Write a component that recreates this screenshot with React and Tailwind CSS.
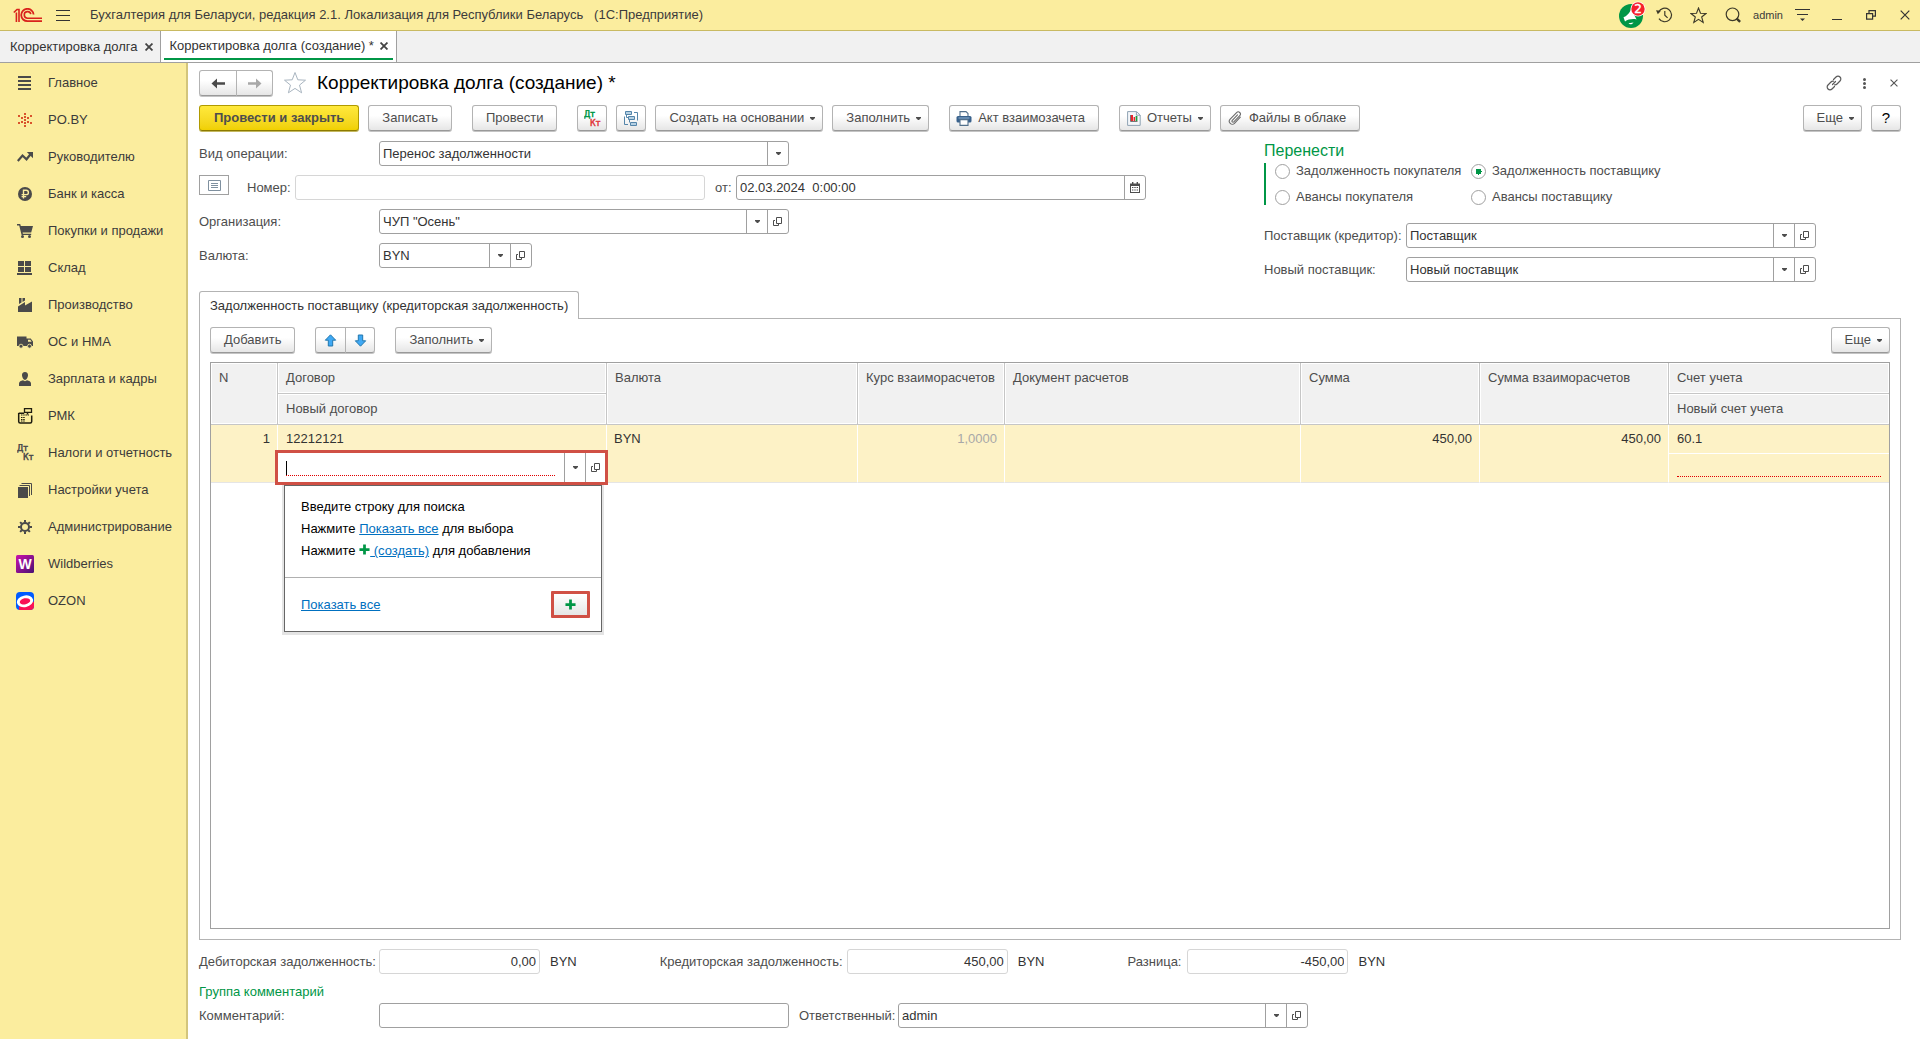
// App.jsx
import { useState } from 'react'

/* ---------- icons ---------- */

function Caret() {
    return (
        <svg width="5" height="3" viewBox="0 0 5 3" className="shrink-0" aria-hidden="true">
            <path d="M0 0h5v1L3 3H2L0 1z" fill="#4d4d4d" />
        </svg>
    )
}

function OpenIcon() {
    return (
        <svg width="10" height="10" viewBox="0 0 10 10" fill="none" stroke="#4d4d4d" strokeWidth="1" aria-hidden="true">
            <path d="M3.5 0.5h5v6h-5z" />
            <path d="M2 3.5H0.5v5h5V7" />
        </svg>
    )
}

function PlusIcon({ className }) {
    return (
        <svg width="11" height="11" viewBox="0 0 12 12" className={className} aria-hidden="true">
            <path d="M4.5 0.5h3v4h4v3h-4v4h-3v-4h-4v-3h4z" fill="#009646" />
        </svg>
    )
}

function StarIcon({ size, color, width = 1 }) {
    return (
        <svg width={size} height={size} viewBox="0 0 24 24" fill="none" stroke={color} strokeWidth={width} aria-hidden="true">
            <path d="M12 1.5l2.8 7.3 7.7 0.4-6 4.9 2.1 7.7L12 17.4l-6.6 4.4 2.1-7.7-6-4.9 7.7-0.4z" />
        </svg>
    )
}

function Logo() {
    return (
        <svg width="30" height="15" viewBox="0 0 30 15" fill="none" stroke="#d9221c" aria-hidden="true">
            <path d="M0.8 4.5L4 1.5H6V14M3.4 4.5V14" strokeWidth="1.6" />
            <path d="M20.6 6.5A6.2 6.2 0 1 0 14.5 13.2H29" strokeWidth="1.8" />
            <path d="M17.8 6.2A3.3 3.3 0 1 0 14.6 10.2H29" strokeWidth="1.6" />
        </svg>
    )
}

function BellIcon() {
    return (
        <svg width="30" height="29" viewBox="0 0 30 29" aria-hidden="true">
            <circle cx="13" cy="15" r="12" fill="#009646" />
            <path d="M5.5 16.2c3-0.8 6.2-4 7.5-8.2l5.6 10.4c-4.2-0.8-8.6 0-11.6 2z" fill="#fff" />
            <path d="M10.5 22.2c1 1.5 4 1.3 5-0.8z" fill="#fff" />
            <circle cx="20" cy="8" r="7.5" fill="#fff" />
            <circle cx="20" cy="8" r="6.7" fill="#f6202a" />
            <text x="20" y="12" textAnchor="middle" fontSize="12" fill="#fff" stroke="#fff" strokeWidth="0.4" fontFamily="DejaVu Sans, sans-serif">2</text>
        </svg>
    )
}

function HistoryIcon() {
    return (
        <svg width="17" height="16" viewBox="0 0 17 16" fill="none" stroke="#3d3a2a" strokeWidth="1.2" aria-hidden="true">
            <path d="M2.6 5A6.8 6.8 0 1 1 3 11.6" />
            <path d="M8.8 4v4.3l2.8 2.6" />
            <path d="M0 3.2l5 0.6-3.2 3.4z" fill="#3d3a2a" stroke="none" />
        </svg>
    )
}

function SearchIcon() {
    return (
        <svg width="16" height="16" viewBox="0 0 16 16" fill="none" stroke="#3d3a2a" aria-hidden="true">
            <circle cx="7.5" cy="7.3" r="6.3" strokeWidth="1.2" />
            <path d="M11.5 11.3l3.6 3.6" strokeWidth="2.4" />
        </svg>
    )
}

function MenuLinesIcon() {
    return (
        <svg width="15" height="14" viewBox="0 0 15 14" aria-hidden="true">
            <path d="M0 1.5h15M2 6.5h11" stroke="#333" strokeWidth="1.2" />
            <path d="M5 10.5h5l-2.5 2.500z" fill="#333" />
        </svg>
    )
}

function CrossIcon({ size = 10, width = 1.2, color = '#333' }) {
    return (
        <svg width={size} height={size} viewBox="0 0 10 10" fill="none" stroke={color} strokeWidth={width} aria-hidden="true">
            <path d="M0.7 0.7l8.6 8.6M9.3 0.7L0.7 9.3" />
        </svg>
    )
}

function LinkIcon() {
    return (
        <svg width="16" height="16" viewBox="0 0 16 16" fill="none" stroke="#5a5a5a" strokeWidth="1.2" strokeLinecap="round" aria-hidden="true">
            <path d="M7.500 4.500l2.500-2.500a2.800 2.800 0 0 1 4 4l-3 3a2.800 2.800 0 0 1-2.400 0.800" />
            <path d="M8.500 11.500l-2.500 2.500a2.800 2.800 0 0 1-4-4l3-3a2.800 2.800 0 0 1 2.400-0.800" />
            <path d="M6.500 9.500l3-3" />
        </svg>
    )
}

function ArrowIcon({ direction, color }) {
    return (
        <svg width="15" height="11" viewBox="0 0 15 11" className={direction === 'right' ? 'rotate-180' : ''} aria-hidden="true">
            <path d="M0.500 5.500L6 0.500v3.700h8v2.600H6v3.700z" fill={color} />
        </svg>
    )
}

function BlueArrow({ down }) {
    return (
        <svg width="13" height="13" viewBox="0 0 13 13" className={down ? 'rotate-180' : ''} aria-hidden="true">
            <path d="M6.5 0.8l5.2 5.4H8.7v5.8H4.3V6.2H1.3z" fill="#3fa9f5" stroke="#2277ad" strokeWidth="1" strokeLinejoin="round" />
        </svg>
    )
}

function DtKtIcon({ top, bottom }) {
    return (
        <svg width="17" height="17" viewBox="0 0 17 17" fontFamily="DejaVu Sans, sans-serif" fontSize="8" strokeWidth="0.5" aria-hidden="true">
            <text x="0" y="7" fill={top} stroke={top}>Дт</text>
            <text x="6" y="16" fill={bottom} stroke={bottom}>Кт</text>
        </svg>
    )
}

function StructureIcon() {
    return (
        <svg width="14" height="15" viewBox="0 0 14 15" fill="none" stroke="#5485aa" aria-hidden="true">
            <path d="M1.500 0.500h6v3h-6zM4.500 5.500h6v3h-6zM6.500 11.500h6v3h-6z" fill="#b5d0e3" />
            <path d="M10 1.500h3.500V9.500M4 13.500H0.500V5.500M2.500 3.500V6.500H4.500M5.500 8.500v3" />
        </svg>
    )
}

function PrinterIcon() {
    return (
        <svg width="16" height="15" viewBox="0 0 16 15" aria-hidden="true">
            <path d="M4 0.6h6l2 2V6H4z" fill="#fff" stroke="#52708c" strokeWidth="1.1" />
            <rect x="0.5" y="5" width="15" height="6.5" rx="1.5" fill="#38618c" />
            <path d="M4 8.6h8v5.8H4z" fill="#fff" stroke="#52708c" strokeWidth="1.1" />
            <rect x="2.5" y="6.5" width="11" height="1" fill="#8fb3d4" />
        </svg>
    )
}

function ReportIcon() {
    return (
        <svg width="14" height="15" viewBox="0 0 14 15" aria-hidden="true">
            <path d="M0.6 0.6h9l3.6 3.4v10.4H0.6z" fill="#f4f7fa" stroke="#8fa3b3" strokeWidth="1" />
            <path d="M9.4 0.8v3.4h3.6" fill="none" stroke="#8fa3b3" />
            <path d="M3.5 4v6.500h7" fill="none" stroke="#777" strokeWidth="1" />
            <rect x="4" y="4" width="2" height="6" fill="#e8252c" />
            <rect x="6.600" y="6" width="1.400" height="4" fill="#e8252c" />
            <rect x="8.600" y="5" width="1.800" height="5" fill="#1f9a3c" />
        </svg>
    )
}

function ClipIcon() {
    return (
        <svg width="14" height="14" viewBox="0 0 14 14" fill="none" stroke="#6b6b6b" strokeWidth="1.1" strokeLinecap="round" aria-hidden="true">
            <path d="M9.5 3.8L4.3 9.4a1 1 0 0 0 1.5 1.500l6-6.300a2.100 2.100 0 0 0-3.200-3L2.200 8.200a3 3 0 0 0 4.300 4.200l5.800-6.200" />
        </svg>
    )
}

function CalendarIcon() {
    return (
        <svg width="10" height="11" viewBox="0 0 10 11" aria-hidden="true">
            <path d="M0 1.5h10V11H0z" fill="#4d4d4d" />
            <path d="M2 0h1.4v2H2zM6.6 0H8v2H6.6z" fill="#4d4d4d" />
            <path d="M1 4h8v6H1z" fill="#fff" />
            <path d="M2 5.5h6M2 8h6" stroke="#4d4d4d" strokeWidth="1.2" strokeDasharray="1.4 0.9" />
        </svg>
    )
}

function ListIcon() {
    return (
        <svg width="13" height="11" viewBox="0 0 13 11" fill="none" stroke="#7f909f" aria-hidden="true">
            <path d="M0.5 0.5h12v10H0.5z" />
            <path d="M3 3.5h7M3 5.5h7M3 7.5h7" />
        </svg>
    )
}

const DARK = '#4a4a4a'

const sidebarIcons = {
    main: (
        <svg width="16" height="16" viewBox="0 0 16 16"><path d="M1 2h13M1 6h13M1 10h13M1 14h13" stroke={DARK} strokeWidth="2" /></svg>
    ),
    poby: (
        <svg width="16" height="16" viewBox="0 0 16 16" fill="#d9532c">
            <path d="M7 1h2v2H7zM7 4h2v2H7zM7 7h2v2H7zM7 10h2v2H7zM7 13h2v2H7zM1 3h2v2H1zM13 3h2v2h-2zM4 5h2v2H4zM10 5h2v2h-2zM4 9h2v2H4zM10 9h2v2h-2zM1 10h2v2H1zM13 10h2v2h-2z" />
        </svg>
    ),
    manager: (
        <svg width="16" height="16" viewBox="0 0 16 16">
            <path d="M0.8 12L5.5 6.5 9.5 10.3 13.5 5.2" fill="none" stroke={DARK} strokeWidth="2.2" />
            <path d="M9.8 3H16v6.2z" fill={DARK} />
        </svg>
    ),
    bank: (
        <svg width="16" height="16" viewBox="0 0 16 16">
            <circle cx="8" cy="8" r="7" fill={DARK} />
            <path d="M6.5 12.5V4.2h2.7a2.1 2.1 0 0 1 0 4.4H4.6M4.6 10.6h4.6" fill="none" stroke="#fbed9e" strokeWidth="1.4" />
        </svg>
    ),
    cart: (
        <svg width="16" height="16" viewBox="0 0 16 16" fill={DARK}>
            <path d="M0 1h3.2l0.6 2H16l-1.8 6.5H5.6l0.3 1.2h8.3v1.3H4.6L2.2 2.4H0z" />
            <circle cx="5.5" cy="13.5" r="1.5" />
            <circle cx="12.5" cy="13.5" r="1.5" />
        </svg>
    ),
    store: (
        <svg width="16" height="16" viewBox="0 0 16 16" fill={DARK}>
            <path d="M1 1h6v5H1zM8 1h6v5H8zM1 7h6v5H1zM8 7h6v5H8zM0 13h15v2H0z" />
        </svg>
    ),
    factory: (
        <svg width="16" height="16" viewBox="0 0 16 16" fill={DARK}>
            <path d="M1 15V9.500L8 5v3.500L15 4.500V15z" />
            <path d="M2 1h2.500v4.500L2 7zM5.500 1H8v2.500L5.500 5z" />
        </svg>
    ),
    truck: (
        <svg width="16" height="16" viewBox="0 0 16 16" fill={DARK}>
            <path d="M0 2.500h9.500V12H0zM9.500 4.500h4.200L16 7.500V12H9.500z" />
            <path d="M11 5.700h2.300l1.300 2H11z" fill="#fbed9e" />
            <circle cx="4" cy="12.2" r="2" stroke="#fbed9e" strokeWidth="0.8" />
            <circle cx="12.5" cy="12.2" r="2" stroke="#fbed9e" strokeWidth="0.8" />
        </svg>
    ),
    person: (
        <svg width="16" height="16" viewBox="0 0 16 16" fill={DARK}>
            <path d="M8 1c2 0 3.200 1.500 3 3.500S9.500 9 8 9 5.200 6.500 5 4.500 6 1 8 1zM2 15v-2.500C2 10.500 4 9.800 6 9.300L8 10.200l2-0.900c2 0.500 4 1.200 4 3.200V15z" />
        </svg>
    ),
    rmk: (
        <svg width="16" height="16" viewBox="0 0 16 16" fill="none" stroke="#1f1d10">
            <path d="M7.500 0.700h7v3.600h-7z" strokeWidth="1.300" />
            <path d="M10.500 4.500v2M1.700 5.200h5.500M1.700 5v8.500c0 1 0.500 1.500 1.500 1.500h10c1 0 1.500-0.500 1.500-1.500V7.500" strokeWidth="1.500" />
            <path d="M4 7h8M4 9.500h4M4 11.500h4M4 13h4" strokeWidth="1.100" strokeDasharray="1.500 0.700" />
        </svg>
    ),
    dtkt: <DtKtIcon top={DARK} bottom={DARK} />,
    settings: (
        <svg width="16" height="16" viewBox="0 0 16 16">
            <path d="M1 5h10v11H1z" fill={DARK} />
            <path d="M2.500 3.500h10V14M4.500 1.500h10V13" fill="none" stroke={DARK} />
        </svg>
    ),
    gear: (
        <svg width="16" height="16" viewBox="0 0 16 16" fill="none" stroke={DARK}>
            <circle cx="8" cy="8" r="4" strokeWidth="2" />
            <path d="M8 1v2.500M8 12.500V15M1 8h2.500M12.500 8H15M3.100 3.100l1.700 1.700M11.200 11.200l1.700 1.700M3.100 12.900l1.700-1.700M11.200 4.800l1.700-1.700" strokeWidth="2" />
        </svg>
    ),
    wildberries: (
        <svg width="18" height="18" viewBox="0 0 18 18">
            <defs>
                <linearGradient id="wb" x1="0" y1="0" x2="1" y2="1">
                    <stop offset="0" stopColor="#cb11ab" />
                    <stop offset="1" stopColor="#481173" />
                </linearGradient>
            </defs>
            <rect width="18" height="18" rx="1.500" fill="url(#wb)" />
            <text x="9" y="14" textAnchor="middle" fontSize="14" fontWeight="bold" fill="#fff" fontFamily="Liberation Sans, sans-serif">W</text>
        </svg>
    ),
    ozon: (
        <svg width="18" height="18" viewBox="0 0 18 18">
            <defs>
                <clipPath id="oz"><rect width="18" height="18" rx="4" /></clipPath>
            </defs>
            <g clipPath="url(#oz)">
                <rect width="18" height="18" fill="#005bff" />
                <path d="M18 9.500L3 14.500V18h15z" fill="#f91155" />
                <ellipse cx="9" cy="9.300" rx="8.200" ry="5.800" fill="#fff" transform="rotate(-12 9 9.300)" />
                <ellipse cx="9" cy="9.300" rx="5.300" ry="3" fill="#f91155" transform="rotate(-12 9 9.300)" />
            </g>
        </svg>
    ),
}

const sections = [
    { icon: 'main', title: 'Главное' },
    { icon: 'poby', title: 'PO.BY' },
    { icon: 'manager', title: 'Руководителю' },
    { icon: 'bank', title: 'Банк и касса' },
    { icon: 'cart', title: 'Покупки и продажи' },
    { icon: 'store', title: 'Склад' },
    { icon: 'factory', title: 'Производство' },
    { icon: 'truck', title: 'ОС и НМА' },
    { icon: 'person', title: 'Зарплата и кадры' },
    { icon: 'rmk', title: 'РМК' },
    { icon: 'dtkt', title: 'Налоги и отчетность' },
    { icon: 'settings', title: 'Настройки учета' },
    { icon: 'gear', title: 'Администрирование' },
    { icon: 'wildberries', title: 'Wildberries' },
    { icon: 'ozon', title: 'OZON' },
]

/* ---------- controls ---------- */

const buttonColors = {
    plain: 'border-[#b3b3b3] border-b-[#999] bg-linear-to-b from-white from-40% to-[#e6e6e6] shadow-[0_1px_0_#c4c4c4]',
    primary: 'border-[#b09a00] border-b-[#8c7a00] bg-linear-to-b from-[#ffe93b] to-[#f0d000] shadow-[0_1px_0_#c4b860] font-bold',
}

function Button({ children, className = '', menu = false, color = 'plain', ...rest }) {
    return (
        <button
            type="button"
            className={`flex h-[26px] shrink-0 items-center justify-center whitespace-nowrap rounded-[3px] border text-[#4d4d4d] ${buttonColors[color]} ${menu ? 'gap-[6px] pl-[13px] pr-[7px]' : ''} ${className}`}
            {...rest}
        >
            {children}
            {menu && <Caret />}
        </button>
    )
}

function Field({ id, value, className = '', open = false, calendar = false }) {
    return (
        <div className={`flex h-[25px] rounded-[3px] border border-[#a0a0a0] bg-white ${className}`}>
            <input id={id} defaultValue={value} className="w-0 min-w-0 flex-1 bg-transparent px-[3px] text-[#333] outline-none" />
            {calendar ? (
                <button type="button" aria-label="Календарь" className="flex w-[21px] items-center justify-center border-l border-[#a0a0a0]">
                    <CalendarIcon />
                </button>
            ) : (
                open && (
                    <>
                        <button type="button" aria-label="Выбрать" className="flex w-[21px] items-center justify-center border-l border-[#a0a0a0]">
                            <Caret />
                        </button>
                        <button type="button" aria-label="Открыть" className="flex w-[21px] items-center justify-center border-l border-[#a0a0a0]">
                            <OpenIcon />
                        </button>
                    </>
                )
            )}
        </div>
    )
}

function Total({ id, label, value, labelClass = '' }) {
    return (
        <div className="flex items-center">
            <label htmlFor={id} className={labelClass}>{label}</label>
            <input id={id} readOnly value={value} className="h-[25px] w-[161px] rounded-[3px] border border-[#d6d6d6] px-[3px] text-right text-[#333] outline-none" />
            <span className="pl-[10px] text-[#333]">BYN</span>
        </div>
    )
}

/* ---------- page parts ---------- */

function TitleBar() {
    return (
        <header className="flex h-[31px] items-center border-b border-[#c9ba62] bg-[#fbed9e] text-[#3b3b3b]">
            <div className="flex w-[56px] pl-[13px]"><Logo /></div>
            <button type="button" aria-label="Меню" className="flex w-[14px] flex-col gap-1">
                <span className="h-px bg-[#333]" />
                <span className="h-px bg-[#333]" />
                <span className="h-px bg-[#333]" />
            </button>
            <h1 className="whitespace-pre pl-5">Бухгалтерия для Беларуси, редакция 2.1. Локализация для Республики Беларусь   (1С:Предприятие)</h1>
            <div className="ml-auto flex items-center pr-[10px]">
                <button type="button" aria-label="Уведомления" className="mr-2 h-[29px] w-[30px]"><BellIcon /></button>
                <button type="button" aria-label="История" className="mr-[17px]"><HistoryIcon /></button>
                <button type="button" aria-label="Избранное" className="mr-[18px]"><StarIcon size={17} color="#3d3a2a" width={1.6} /></button>
                <button type="button" aria-label="Поиск" className="mr-3">
                    <SearchIcon />
                </button>
                <button type="button" className="mr-3 text-[11px]">admin</button>
                <button type="button" aria-label="Настройки" className="mr-[22px]"><MenuLinesIcon /></button>
                <button type="button" aria-label="Свернуть" className="mr-6 flex h-[10px] w-[10px] items-end"><span className="h-px w-full bg-[#333]" /></button>
                <button type="button" aria-label="Развернуть" className="mr-6">
                    <svg width="10" height="10" viewBox="0 0 10 10" fill="none" stroke="#333" strokeWidth="1.200" aria-hidden="true">
                        <path d="M0.600 3.600h6v5.600h-6zM3 3.500V0.600h6.400v5.600H6.600" />
                    </svg>
                </button>
                <button type="button" aria-label="Закрыть"><CrossIcon /></button>
            </div>
        </header>
    )
}

function WindowTabs() {
    return (
        <nav className="flex h-8 border-b border-[#a0a0a0] bg-[#f1f1f1] text-[#333]">
            <div className="flex items-center gap-[7px] border-r border-[#a0a0a0] pl-[10px] pr-[7px]">
                <button type="button">Корректировка долга</button>
                <button type="button" aria-label="Закрыть вкладку"><CrossIcon size={8} width={2.2} color="#444" /></button>
            </div>
            <div className="flex flex-col border-r border-[#a0a0a0] bg-white px-[3px] pb-[2px]">
                <div className="flex flex-1 items-center gap-[6px] pl-[6px] pr-[5px] pt-[3px]">
                    <button type="button">Корректировка долга (создание) *</button>
                    <button type="button" aria-label="Закрыть вкладку"><CrossIcon size={8} width={2.2} color="#444" /></button>
                </div>
                <div className="h-[2px] bg-[#009646]" />
            </div>
        </nav>
    )
}

function Sidebar() {
    return (
        <aside className="w-[188px] shrink-0 border-r-2 border-[#d3c57c] bg-[#fbed9e] pt-px text-[#3b3b3b]">
            {sections.map(({ icon, title }) => (
                <a key={title} href="#" className="flex h-[37px] items-center whitespace-nowrap">
                    <span className="flex w-12 justify-center pl-[2px]">{sidebarIcons[icon]}</span>
                    {title}
                </a>
            ))}
        </aside>
    )
}

function Toolbar() {
    return (
        <div className="flex gap-[9px]">
            <Button color="primary" className="px-[14px]">Провести и закрыть</Button>
            <Button className="mr-[11px] px-[13px]">Записать</Button>
            <Button className="mr-[11px] px-[13px]">Провести</Button>
            <Button className="w-[30px]" aria-label="Дт Кт"><DtKtIcon top="#009646" bottom="#e0393e" /></Button>
            <Button className="w-[30px]" aria-label="Структура подчиненности"><StructureIcon /></Button>
            <Button menu>Создать на основании</Button>
            <Button menu className="mr-[11px]">Заполнить</Button>
            <Button className="mr-[11px] gap-[6px] pl-[6px] pr-[13px]"><PrinterIcon />Акт взаимозачета</Button>
            <Button className="gap-[6px] px-[7px]"><ReportIcon />Отчеты<Caret /></Button>
            <Button className="gap-[7px] pl-[7px] pr-[13px]"><ClipIcon />Файлы в облаке</Button>
            <Button menu className="ml-auto">Еще</Button>
            <Button className="w-[30px] text-[15px]" aria-label="Справка"><span className="text-black">?</span></Button>
        </div>
    )
}

const transferOptions = [
    'Задолженность покупателя',
    'Задолженность поставщику',
    'Авансы покупателя',
    'Авансы поставщику',
]

function TransferGroup() {
    const [selected, setSelected] = useState('Задолженность поставщику')

    return (
        <fieldset>
            <legend className="mb-[2px] text-[16px] leading-5 text-[#009646]">Перенести</legend>
            <div className="grid w-fit grid-cols-[196px_auto] gap-y-[10px] border-l-2 border-[#009646] pl-[9px]">
                {transferOptions.map((option) => (
                    <label key={option} className="flex h-4 items-center gap-[6px] whitespace-nowrap">
                        <input
                            type="radio"
                            name="transfer"
                            checked={selected === option}
                            onChange={() => setSelected(option)}
                            className="h-[15px] w-[15px] appearance-none rounded-full border border-[#a0a0a0] bg-white checked:bg-[radial-gradient(circle,#009646_0_3px,white_3px)]"
                        />
                        {option}
                    </label>
                ))}
            </div>
        </fieldset>
    )
}

function DocumentFields() {
    return (
        <div className="flex">
            <div className="mr-[118px] flex grow-[947] basis-0 flex-col gap-[9px]">
                <div className="flex items-center">
                    <label htmlFor="operation" className="w-[180px]">Вид операции:</label>
                    <div className="relative h-[25px] w-[410px] rounded-[3px] border border-[#a0a0a0]">
                        <select id="operation" className="h-full w-full appearance-none px-[3px] text-[#333] outline-none">
                            <option>Перенос задолженности</option>
                        </select>
                        <span className="pointer-events-none absolute inset-y-0 right-0 flex w-[21px] items-center justify-center border-l border-[#a0a0a0]">
                            <Caret />
                        </span>
                    </div>
                </div>
                <div className="flex h-[25px] items-center">
                    <button type="button" aria-label="История номера" className="mr-[18px] flex h-5 w-[30px] items-center justify-center self-start border border-[#a0a0a0]">
                        <ListIcon />
                    </button>
                    <label htmlFor="number" className="w-12">Номер:</label>
                    <input id="number" className="h-[25px] min-w-0 flex-1 rounded-[3px] border border-[#d6d6d6] outline-none" />
                    <label htmlFor="date" className="w-[31px] pl-[10px]">от:</label>
                    <Field id="date" value="02.03.2024  0:00:00" calendar className="flex-1" />
                </div>
                <div className="flex items-center">
                    <label htmlFor="organization" className="w-[180px]">Организация:</label>
                    <Field id="organization" value={'ЧУП "Осень"'} open className="w-[410px]" />
                </div>
                <div className="flex items-center">
                    <label htmlFor="currency" className="w-[180px]">Валюта:</label>
                    <Field id="currency" value="BYN" open className="w-[153px]" />
                </div>
            </div>
            <div className="mr-[85px] flex grow-[552] basis-0 flex-col">
                <TransferGroup />
                <div className="mt-[18px] flex flex-col gap-[9px]">
                    <div className="flex items-center">
                        <label htmlFor="supplier" className="w-[142px] whitespace-nowrap">Поставщик (кредитор):</label>
                        <Field id="supplier" value="Поставщик" open className="flex-1" />
                    </div>
                    <div className="flex items-center">
                        <label htmlFor="new-supplier" className="w-[142px] whitespace-nowrap">Новый поставщик:</label>
                        <Field id="new-supplier" value="Новый поставщик" open className="flex-1" />
                    </div>
                </div>
            </div>
        </div>
    )
}

function ContractPopup() {
    return (
        <div className="absolute left-[6px] top-[31px] w-[318px] border border-[#666] bg-white text-black shadow-[0_1px_0_2px_#e4e4e4]">
            <div className="h-[92px] border-b border-[#b0b0b0] px-4 pt-[10px] leading-[22px]">
                <p>Введите строку для поиска</p>
                <p>Нажмите <a href="#" className="text-[#0070c0] underline">Показать все</a> для выбора</p>
                <p>Нажмите <PlusIcon className="inline align-baseline" /><a href="#" className="text-[#0070c0] underline">&nbsp;(создать)</a> для добавления</p>
            </div>
            <div className="flex h-[53px] items-center justify-between pl-4 pr-[11px]">
                <a href="#" className="text-[#0070c0] underline">Показать все</a>
                <button type="button" aria-label="Создать" className="flex h-[27px] w-[39px] items-center justify-center rounded-[1px] border-[3px] border-[#d05045] bg-linear-to-b from-white to-[#e6e6e6]">
                    <PlusIcon />
                </button>
            </div>
        </div>
    )
}

function ContractEditor() {
    return (
        <div className="absolute -left-[3px] -top-1 z-10 flex h-[35px] w-[333px] border-[3px] border-[#d05045] bg-white">
            <div className="flex flex-1 pb-[6px] pl-2 pr-[9px] pt-[4px]">
                <input aria-label="Новый договор" autoFocus className="w-full border-b border-dotted border-[#e00000] bg-[linear-gradient(#000,#000)] bg-[length:1px_15px] bg-[position:0_4px] bg-no-repeat caret-transparent outline-none" />
            </div>
            <button type="button" aria-label="Выбрать" className="flex w-[21px] items-center justify-center border-l border-[#a0a0a0]">
                <Caret />
            </button>
            <button type="button" aria-label="Открыть" className="flex w-[20px] items-center justify-center border-l border-[#a0a0a0]">
                <OpenIcon />
            </button>
        </div>
    )
}

const TH = 'border-b border-r border-[#c6c6c6] bg-[#f1f1f1] px-2 text-left align-top font-normal leading-[30px] shadow-[inset_0_0_0_1px_white] last:border-r-0'
const TD = 'border-b border-r border-b-[#e5e5e5] border-r-white px-[7px] align-top leading-[28px]'

function DebtTable() {
    return (
        <div className="flex-1 border border-[#a0a0a0]">
            <table className="w-full table-fixed border-separate border-spacing-0">
                <colgroup>
                    <col className="w-[67px]" />
                    <col className="w-[329px]" />
                    <col className="w-[251px]" />
                    <col className="w-[147px]" />
                    <col className="w-[296px]" />
                    <col className="w-[179px]" />
                    <col className="w-[189px]" />
                    <col />
                </colgroup>
                <thead className="text-[#4d4d4d]">
                    <tr>
                        <th rowSpan={2} className={TH}>N</th>
                        <th className={TH}>Договор</th>
                        <th rowSpan={2} className={TH}>Валюта</th>
                        <th rowSpan={2} className={`${TH} whitespace-nowrap`}>Курс взаиморасчетов</th>
                        <th rowSpan={2} className={TH}>Документ расчетов</th>
                        <th rowSpan={2} className={TH}>Сумма</th>
                        <th rowSpan={2} className={TH}>Сумма взаиморасчетов</th>
                        <th className={TH}>Счет учета</th>
                    </tr>
                    <tr>
                        <th className={TH}>Новый договор</th>
                        <th className={TH}>Новый счет учета</th>
                    </tr>
                </thead>
                <tbody className="bg-[#fdf2c6] text-[#333]">
                    <tr>
                        <td rowSpan={2} className={`${TD} text-right`}>1</td>
                        <td className="border-b border-r border-white px-2 leading-[28px]">12212121</td>
                        <td rowSpan={2} className={TD}>BYN</td>
                        <td rowSpan={2} className={`${TD} text-right text-[#a8a8a8]`}>1,0000</td>
                        <td rowSpan={2} className={TD} />
                        <td rowSpan={2} className={`${TD} text-right`}>450,00</td>
                        <td rowSpan={2} className={`${TD} text-right`}>450,00</td>
                        <td className="border-b border-white px-2 leading-[28px]">60.1</td>
                    </tr>
                    <tr>
                        <td className="relative h-[29px] border-b border-b-[#e5e5e5] p-0">
                            <ContractEditor />
                            <ContractPopup />
                        </td>
                        <td className="h-[29px] border-b border-b-[#e5e5e5] px-2 align-top">
                            <div className="h-[23px] border-b border-dotted border-[#e00000]" />
                        </td>
                    </tr>
                </tbody>
            </table>
        </div>
    )
}

function DebtPanel() {
    return (
        <section className="mt-[9px] flex flex-1 flex-col">
            <button type="button" className="relative -mb-px h-7 self-start rounded-t-[3px] border border-b-0 border-[#b3b3b3] bg-white px-[10px] text-[#333]">
                Задолженность поставщику (кредиторская задолженность)
            </button>
            <div className="flex flex-1 flex-col border border-[#b3b3b3] px-[10px] pb-[10px] pt-2">
                <div className="mb-[9px] flex">
                    <Button className="mr-5 px-[13px]">Добавить</Button>
                    <Button className="w-[31px] rounded-r-none" aria-label="Переместить вверх"><BlueArrow /></Button>
                    <Button className="-ml-px mr-5 w-[30px] rounded-l-none" aria-label="Переместить вниз"><BlueArrow down /></Button>
                    <Button menu>Заполнить</Button>
                    <Button menu className="ml-auto">Еще</Button>
                </div>
                <DebtTable />
            </div>
        </section>
    )
}

function Footer() {
    return (
        <footer className="pb-[11px] pt-[9px]">
            <div className="flex">
                <Total id="debit" label="Дебиторская задолженность:" value="0,00" labelClass="w-[180px]" />
                <div className="w-[83px]" />
                <Total id="credit" label="Кредиторская задолженность:" value="450,00" labelClass="w-[187px]" />
                <div className="w-[83px]" />
                <Total id="difference" label="Разница:" value="-450,00" labelClass="w-[60px]" />
            </div>
            <h3 className="pb-[2px] pt-[9px] leading-[18px] text-[#009646]">Группа комментарий</h3>
            <div className="flex items-center">
                <label htmlFor="comment" className="w-[180px]">Комментарий:</label>
                <Field id="comment" value="" className="w-[410px]" />
                <label htmlFor="responsible" className="w-[109px] pl-[10px]">Ответственный:</label>
                <Field id="responsible" value="admin" open className="w-[410px]" />
            </div>
        </footer>
    )
}

export default function App() {
    return (
        <div className="flex min-h-screen flex-col bg-white font-['Liberation_Sans',Arial,sans-serif] text-[13px] leading-4 text-[#4d4d4d]">
            <TitleBar />
            <WindowTabs />
            <div className="flex flex-1">
                <Sidebar />
                <main className="flex min-w-0 flex-1 flex-col pl-[11px] pr-[19px] pt-2">
                    <div className="mb-[10px] flex h-6 items-center">
                        <Button className="h-[24px] w-[38px] rounded-r-none" aria-label="Назад"><ArrowIcon direction="left" color="#4a4a4a" /></Button>
                        <Button className="-ml-px h-[24px] w-[37px] rounded-l-none" aria-label="Вперед"><ArrowIcon direction="right" color="#a8a8a8" /></Button>
                        <button type="button" aria-label="В избранное" className="mx-[10px]"><StarIcon size={24} color="#a9b5c0" /></button>
                        <h2 className="text-[19px] leading-6 text-black">Корректировка долга (создание) *</h2>
                        <div className="ml-auto flex items-center pr-[3px]">
                            <button type="button" aria-label="Ссылка" className="mr-[21px]"><LinkIcon /></button>
                            <button type="button" aria-label="Еще действия" className="mr-6 flex flex-col gap-px">
                                <span className="h-[3px] w-[3px] rounded-full bg-[#555]" />
                                <span className="h-[3px] w-[3px] rounded-full bg-[#555]" />
                                <span className="h-[3px] w-[3px] rounded-full bg-[#555]" />
                            </button>
                            <button type="button" aria-label="Закрыть форму"><CrossIcon size={8} width={1.4} color="#555" /></button>
                        </div>
                    </div>
                    <Toolbar />
                    <div className="h-[10px]" />
                    <DocumentFields />
                    <DebtPanel />
                    <Footer />
                </main>
            </div>
        </div>
    )
}
